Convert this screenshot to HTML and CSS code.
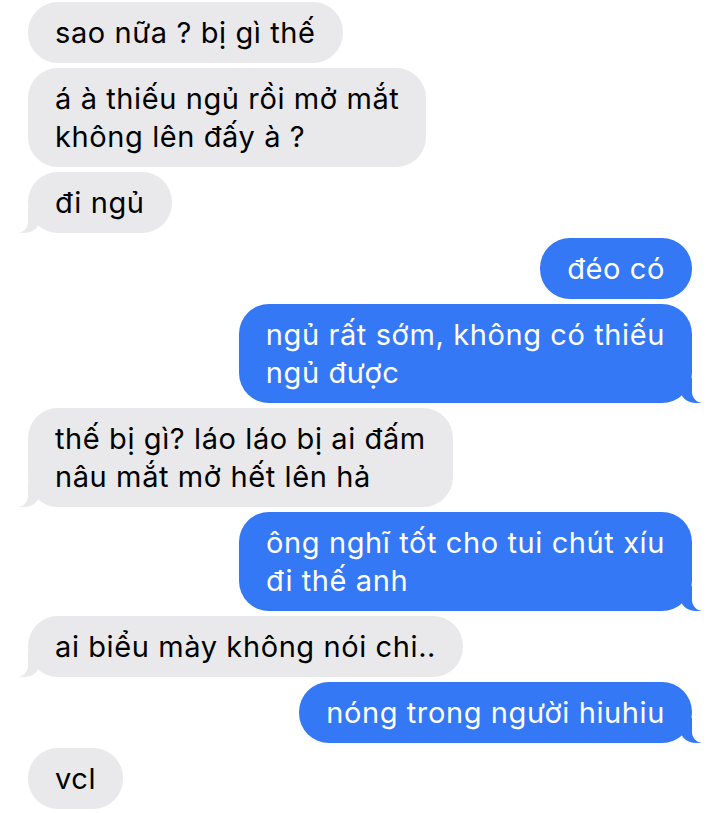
FILE: index.html
```html
<!DOCTYPE html>
<html lang="vi">
<head>
  <meta charset="UTF-8" />
  <meta name="viewport" content="width=device-width, initial-scale=1.0" />
  <title>Tin nhắn</title>
  <link rel="stylesheet" href="styles.css">
</head>
<body>
  <main class="chat">
    <p class="msg them">sao nữa ? bị gì thế</p>
    <p class="msg them">á à thiếu ngủ rồi mở mắt<br>không lên đấy à ?</p>
    <p class="msg them tail">đi ngủ</p>
    <p class="msg me">đéo có</p>
    <p class="msg me tail">ngủ rất sớm, không có thiếu<br>ngủ được</p>
    <p class="msg them tail">thế bị gì? láo láo bị ai đấm<br>nâu mắt mở hết lên hả</p>
    <p class="msg me tail">ông nghĩ tốt cho tui chút xíu<br>đi thế anh</p>
    <p class="msg them tail">ai biểu mày không nói chi..</p>
    <p class="msg me tail">nóng trong người hiuhiu</p>
    <p class="msg them">vcl</p>
  </main>
</body>
</html>
```

FILE: styles.css
```css
:root {
  --blue: #3478f6;
  --gray: #e9e9eb;
  --bg: #ffffff;
}
* {
  box-sizing: border-box;
  margin: 0;
  padding: 0;
}
body {
  background: var(--bg);
  font-family: 'Inter', 'Noto Sans', sans-serif;
  font-size: 29px;
  line-height: 38px;
  overflow: hidden;
}
.chat {
  display: flex;
  flex-direction: column;
  gap: 5px;
  padding: 2px 28px 0;
}
.msg {
  position: relative;
  padding: 11.5px 27px;
  border-radius: 30px;
  white-space: nowrap;
  letter-spacing: 0.6px;
}
.them {
  align-self: flex-start;
  background: var(--gray);
  color: #000;
}
.me {
  align-self: flex-end;
  background: var(--blue);
  color: #fff;
}

/* bubble tails */
.tail::before,
.tail::after {
  content: "";
  position: absolute;
  bottom: 0;
  height: 25px;
}
.them.tail::before {
  left: -10px;
  width: 22px;
  background: var(--gray);
  border-bottom-right-radius: 16px 14px;
}
.them.tail::after {
  left: -28px;
  width: 28px;
  background: var(--bg);
  border-bottom-right-radius: 11px;
}
.me.tail::before {
  right: -10px;
  width: 22px;
  background: var(--blue);
  border-bottom-left-radius: 16px 14px;
}
.me.tail::after {
  right: -28px;
  width: 28px;
  background: var(--bg);
  border-bottom-left-radius: 11px;
}
```
